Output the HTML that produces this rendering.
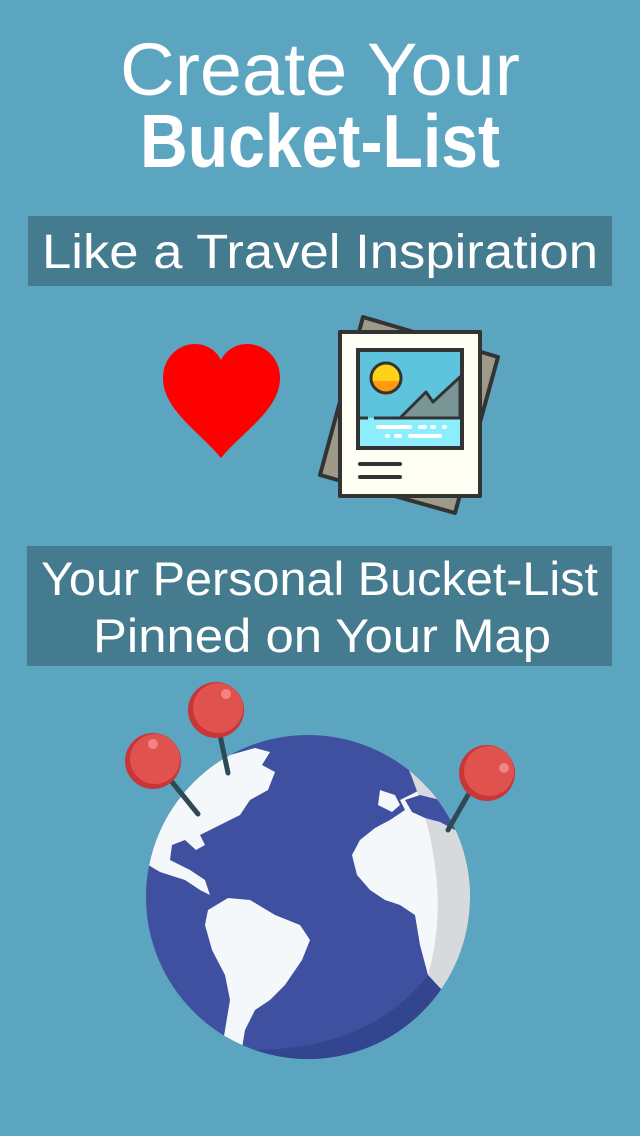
<!DOCTYPE html>
<html><head><meta charset="utf-8"><style>
html,body{margin:0;padding:0;background:#5ba5c0;}
svg{display:block}
text{font-family:"Liberation Sans",sans-serif;fill:#fff}
</style></head><body>
<svg width="640" height="1136" viewBox="0 0 640 1136" xmlns="http://www.w3.org/2000/svg">
<rect width="640" height="1136" fill="#5ba5c0"/>
<text x="120" y="95" font-size="74" textLength="400" lengthAdjust="spacingAndGlyphs">Create Your</text>
<text x="140" y="167" font-size="75" font-weight="bold" textLength="360" lengthAdjust="spacingAndGlyphs">Bucket-List</text>
<rect x="28" y="216" width="584" height="70" fill="#447b8f"/>
<text x="42" y="268" font-size="48" textLength="556" lengthAdjust="spacingAndGlyphs">Like a Travel Inspiration</text>
<rect x="27" y="546" width="585" height="120" fill="#447b8f"/>
<text x="41" y="595" font-size="47" textLength="557" lengthAdjust="spacingAndGlyphs">Your Personal Bucket-List</text>
<text x="93" y="652" font-size="47" textLength="458" lengthAdjust="spacingAndGlyphs">Pinned on Your Map</text>

<path d="M221 458 C200 432 163 410 163 378 C163 358 178 344 195 344 C208 344 217 352 221 360 C225 352 234 344 247 344 C265 344 280 358 280 378 C280 410 242 432 221 458 Z" fill="#ff0000"/>

<g stroke="#333" stroke-width="4" stroke-linejoin="round">
<path d="M363 317 L498 357 L455 513 L320 475 Z" fill="#9e9a8a"/>
<rect x="340" y="332" width="140" height="164" fill="#fffef2"/>
<rect x="358" y="350" width="104" height="98" fill="#5ec4de"/>
</g>
<path d="M360 418 L460 418 L460 446 L360 446 Z" fill="#8ceefc"/>
<path d="M400 418 L426 392 L433 402 L460 377 L460 418 Z" fill="#7a9596" stroke="#333" stroke-width="3" stroke-linejoin="round"/>
<circle cx="386" cy="378" r="15" fill="#ffd21a"/>
<path d="M372 381 A14 14 0 0 0 400 381 Z" fill="#ff9a10"/>
<circle cx="386" cy="378" r="15" fill="none" stroke="#333" stroke-width="3"/>
<line x1="358" y1="418" x2="462" y2="418" stroke="#333" stroke-width="3" stroke-dasharray="10 6 200"/>
<rect x="358" y="350" width="104" height="98" fill="none" stroke="#333" stroke-width="4"/>
<g stroke="#fff" stroke-width="4" stroke-linecap="round">
<line x1="378" y1="427" x2="410" y2="427"/><line x1="420" y1="427" x2="425" y2="427"/><line x1="432" y1="427" x2="434" y2="427"/><line x1="444" y1="427" x2="445" y2="427"/>
<line x1="387" y1="436" x2="388" y2="436"/><line x1="396" y1="436" x2="400" y2="436"/><line x1="410" y1="436" x2="440" y2="436"/>
</g>
<g stroke="#333" stroke-width="4" stroke-linecap="round">
<line x1="360" y1="464" x2="400" y2="464"/><line x1="360" y1="477" x2="400" y2="477"/>
</g>

<defs><clipPath id="g"><circle cx="308" cy="897" r="162"/></clipPath></defs>
<circle cx="308" cy="897" r="162" fill="#3f50a0"/>
<g clip-path="url(#g)">
<path d="M140 860 L150 830 L170 800 L195 775 L230 755 L255 748 L270 752 L262 765 L275 772 L268 790 L250 800 L240 815 L210 830 L200 835 L205 845 L196 850 L185 840 L172 845 L170 860 L190 870 L205 880 L210 895 L200 890 L185 880 L160 872 Z" fill="#f5f8fb"/>
<path d="M208 910 L228 898 L250 900 L275 915 L300 925 L310 940 L302 960 L285 985 L270 1000 L255 1010 L245 1030 L240 1060 L220 1060 L225 1030 L230 1000 L225 975 L212 950 L205 925 Z" fill="#f5f8fb"/>
<path d="M380 790 L378 805 L392 812 L400 805 L395 795 Z M400 800 L420 790 L440 785 L460 795 L470 850 L470 900 L450 960 L440 990 L428 975 L420 945 L415 915 L400 905 L385 900 L370 890 L357 875 L352 855 L360 840 L375 828 L390 820 L405 810 Z" fill="#f5f8fb"/>
<path d="M395 738 A162 162 0 0 1 442 990 L428 975 Q458 870 395 738 Z" fill="#d8d9dc"/>
<path d="M405 800 L420 795 L440 800 L458 815 L455 830 L440 822 L425 818 L412 812 Z" fill="#3f50a0"/>
<path d="M442 990 A162 162 0 0 1 250 1050 Q370 1050 428 975 Z" fill="#344590"/>
</g>
<g stroke="#2d4a55" stroke-width="5" stroke-linecap="round">
<line x1="172" y1="782" x2="198" y2="814"/>
<line x1="220" y1="735" x2="228" y2="773"/>
<line x1="468" y1="795" x2="448" y2="830"/>
</g>
<g>
<circle cx="153" cy="761" r="28" fill="#c9363a"/><circle cx="155" cy="759" r="25" fill="#e0524e"/><circle cx="153" cy="744" r="5" fill="#f28583"/>
<circle cx="216" cy="710" r="28" fill="#c9363a"/><circle cx="218" cy="708" r="25" fill="#e0524e"/><circle cx="226" cy="694" r="5" fill="#f28583"/>
<circle cx="487" cy="773" r="28" fill="#c9363a"/><circle cx="489" cy="771" r="25" fill="#e0524e"/><circle cx="504" cy="768" r="5" fill="#f28583"/>
</g>
</svg>
</body></html>
